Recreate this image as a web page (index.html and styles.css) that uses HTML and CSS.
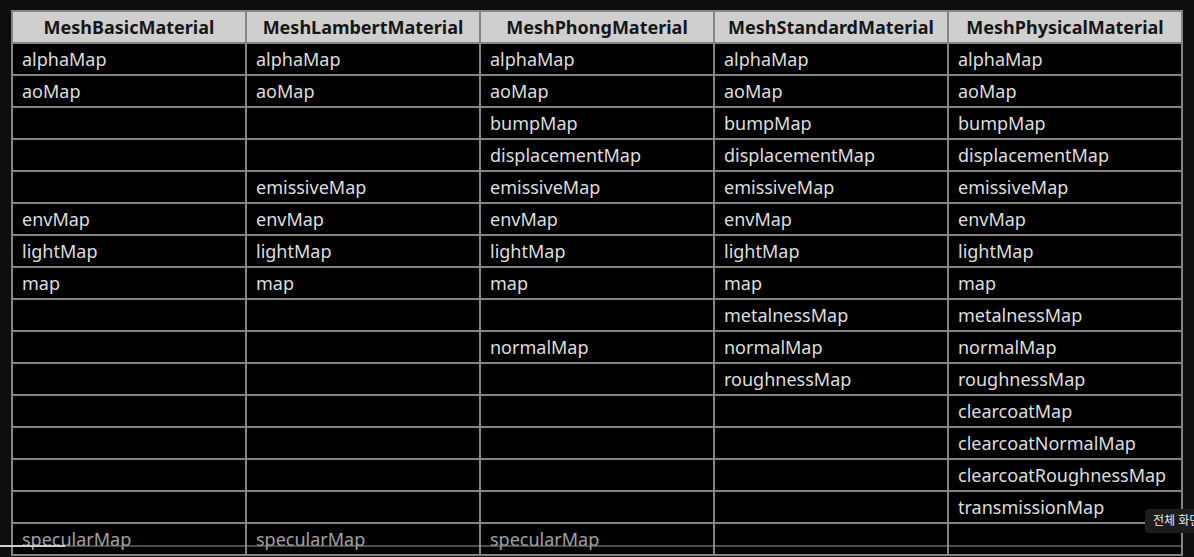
FILE: index.html
```html
<!DOCTYPE html>
<html lang="ko">
<head>
<meta charset="utf-8">
<link rel="stylesheet" href="styles.css">
</head>
<body>
<div class="stage">
  <table class="maps">
    <thead>
      <tr><th>MeshBasicMaterial</th><th>MeshLambertMaterial</th><th>MeshPhongMaterial</th><th>MeshStandardMaterial</th><th>MeshPhysicalMaterial</th></tr>
    </thead>
    <tbody>
      <tr><td>alphaMap</td><td>alphaMap</td><td>alphaMap</td><td>alphaMap</td><td>alphaMap</td></tr>
      <tr><td>aoMap</td><td>aoMap</td><td>aoMap</td><td>aoMap</td><td>aoMap</td></tr>
      <tr><td></td><td></td><td>bumpMap</td><td>bumpMap</td><td>bumpMap</td></tr>
      <tr><td></td><td></td><td>displacementMap</td><td>displacementMap</td><td>displacementMap</td></tr>
      <tr><td></td><td>emissiveMap</td><td>emissiveMap</td><td>emissiveMap</td><td>emissiveMap</td></tr>
      <tr><td>envMap</td><td>envMap</td><td>envMap</td><td>envMap</td><td>envMap</td></tr>
      <tr><td>lightMap</td><td>lightMap</td><td>lightMap</td><td>lightMap</td><td>lightMap</td></tr>
      <tr><td>map</td><td>map</td><td>map</td><td>map</td><td>map</td></tr>
      <tr><td></td><td></td><td></td><td>metalnessMap</td><td>metalnessMap</td></tr>
      <tr><td></td><td></td><td>normalMap</td><td>normalMap</td><td>normalMap</td></tr>
      <tr><td></td><td></td><td></td><td>roughnessMap</td><td>roughnessMap</td></tr>
      <tr><td></td><td></td><td></td><td></td><td>clearcoatMap</td></tr>
      <tr><td></td><td></td><td></td><td></td><td>clearcoatNormalMap</td></tr>
      <tr><td></td><td></td><td></td><td></td><td>clearcoatRoughnessMap</td></tr>
      <tr><td></td><td></td><td></td><td></td><td>transmissionMap</td></tr>
      <tr class="dim"><td>specularMap</td><td>specularMap</td><td>specularMap</td><td></td><td></td></tr>
    </tbody>
  </table>
  <div class="progress"><div class="played"></div></div>
  <div class="tooltip">전체 화면</div>
</div>
</body>
</html>
```
FILE: styles.css
```css
html, body {
  margin: 0;
  padding: 0;
  background: #0e0e0e;
  overflow: hidden;
}
.stage {
  position: relative;
  width: 1194px;
  height: 557px;
  padding: 10px 0 0 11px;
  box-sizing: border-box;
  font-family: "Noto Sans", "Noto Sans CJK KR", sans-serif;
}
.maps {
  border-collapse: collapse;
  table-layout: fixed;
  width: 1172px;
}
.maps th, .maps td {
  border: 2px solid #848484;
  width: 234px;
  text-align: left;
  padding: 0 0 0 9px;
  box-sizing: border-box;
  white-space: nowrap;
  overflow: hidden;
}
.maps th {
  background: #cfcfcf;
  color: #161616;
  font-size: 18px;
  font-weight: 700;
  height: 32px;
  line-height: 30px;
  text-align: center;
  padding: 0;
}
.maps td {
  background: #000;
  color: #dedede;
  font-size: 18px;
  height: 32px;
  line-height: 30px;
}
.maps tr.dim td {
  color: #a0a0a0;
  line-height: 27px;
}
.progress {
  position: absolute;
  left: 0;
  right: 12px;
  top: 545px;
  height: 2px;
  background: rgba(150, 150, 150, 0.5);
}
.played {
  width: 65px;
  height: 100%;
  background: #cfcfcf;
}
.tooltip {
  position: absolute;
  left: 1145px;
  top: 509px;
  height: 24px;
  padding: 0 8px;
  border-radius: 4px;
  background: #1d1d1d;
  color: #eaeaea;
  font-size: 12px;
  line-height: 24px;
  white-space: nowrap;
}
```
